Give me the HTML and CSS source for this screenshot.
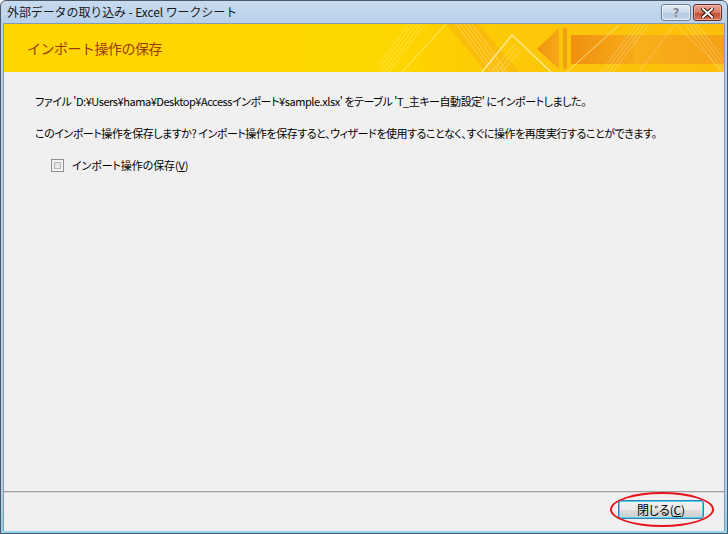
FILE: index.html
```html
<!DOCTYPE html>
<html lang="ja">
<head>
<meta charset="utf-8">
<title>外部データの取り込み - Excel ワークシート</title>
<link rel="stylesheet" href="styles.css">
</head>
<body>
<div class="window">
  <div class="titlebar">
    <span class="title">外部データの取り込み - Excel ワークシート</span>
    <div class="caption-buttons">
      <div class="cbtn help"><span>?</span></div>
      <div class="cbtn close">
        <svg width="13" height="10" viewBox="0 0 13 10"><path d="M2 1 L11 9 M11 1 L2 9" stroke="#3a1a14" stroke-width="4" stroke-linecap="square"/><path d="M2 1 L11 9 M11 1 L2 9" stroke="#fff" stroke-width="2" stroke-linecap="square"/></svg>
      </div>
    </div>
  </div>
  <div class="client">
    <div class="banner">
      <span class="banner-title">インポート操作の保存</span>
      <svg class="banner-art" width="345" height="48" viewBox="0 0 345 48">
        <defs>
          <linearGradient id="bg" x1="0" x2="1" y1="0" y2="0">
            <stop offset="0" stop-color="#ffd800" stop-opacity="0"/>
            <stop offset="0.15" stop-color="#fed000"/>
            <stop offset="0.5" stop-color="#fcc60a"/>
            <stop offset="1" stop-color="#fbbf0c"/>
          </linearGradient>
          <linearGradient id="arrow" x1="0" x2="1" y1="0" y2="0">
            <stop offset="0" stop-color="#f09010"/>
            <stop offset="1" stop-color="#f6aa18"/>
          </linearGradient>
          <linearGradient id="rshape" x1="0" x2="1" y1="0" y2="0">
            <stop offset="0" stop-color="#f8b01a"/>
            <stop offset="1" stop-color="#f5a214"/>
          </linearGradient>
        </defs>
        <rect x="0" y="0" width="345" height="48" fill="url(#bg)"/>
        <g stroke="#fff" stroke-opacity="0.28" stroke-width="1">
          <line x1="-6" y1="48" x2="30" y2="0"/>
          <line x1="-2" y1="48" x2="34" y2="0"/>
          <line x1="2" y1="48" x2="38" y2="0"/>
          <line x1="6" y1="48" x2="42" y2="0"/>
          <line x1="10" y1="48" x2="46" y2="0"/>
        </g>
        <line x1="23" y1="48" x2="67" y2="0" stroke="#fff6a0" stroke-opacity="0.7" stroke-width="1"/>
        <polygon points="67,0 100,0 140,48 107,48" fill="#f6ae10" fill-opacity="0.45"/>
        <g stroke="#fff" stroke-opacity="0.3" stroke-width="1">
          <line x1="77" y1="0" x2="112" y2="48"/>
          <line x1="81" y1="0" x2="116" y2="48"/>
          <line x1="85" y1="0" x2="120" y2="48"/>
          <line x1="89" y1="0" x2="124" y2="48"/>
          <line x1="93" y1="0" x2="128" y2="48"/>
        </g>
        <polyline points="103,48 133,11 172,48" fill="none" stroke="#fff4c0" stroke-opacity="0.75" stroke-width="1.5"/>
        <g stroke="#fff" stroke-opacity="0.3" stroke-width="1">
          <line x1="113" y1="48" x2="136" y2="20"/>
          <line x1="118" y1="48" x2="139" y2="23"/>
          <line x1="123" y1="48" x2="142" y2="26"/>
        </g>
        <polygon points="158,25 180,4 180,45" fill="url(#arrow)"/>
        <rect x="184" y="4" width="4" height="41" fill="#f4a014"/>
        <rect x="192" y="11" width="62" height="29" fill="url(#arrow)"/>
        <line x1="188" y1="48" x2="240" y2="1" stroke="#fff6b0" stroke-opacity="0.7" stroke-width="1"/>
        <rect x="254" y="11" width="91" height="29" fill="url(#rshape)"/>
        <g stroke="#fff" stroke-opacity="0.28" stroke-width="1">
          <line x1="222" y1="48" x2="258" y2="0"/>
          <line x1="226" y1="48" x2="262" y2="0"/>
          <line x1="230" y1="48" x2="266" y2="0"/>
          <line x1="234" y1="48" x2="270" y2="0"/>
          <line x1="306" y1="0" x2="342" y2="48"/>
          <line x1="310" y1="0" x2="346" y2="48"/>
          <line x1="314" y1="0" x2="350" y2="48"/>
          <line x1="318" y1="0" x2="354" y2="48"/>
        </g>
        <polyline points="260,48 296,0 345,48" fill="none" stroke="#fff" stroke-opacity="0.25" stroke-width="1"/>
      </svg>
    </div>
    <div class="content">
      <p class="msg">ファイル 'D:¥Users¥hama¥Desktop¥Accessインポート¥sample.xlsx' をテーブル 'T_主キー自動設定' にインポートしました。</p>
      <p class="msg">このインポート操作を保存しますか? インポート操作を保存すると、ウィザードを使用することなく、すぐに操作を再度実行することができます。</p>
      <label class="check-row">
        <span class="checkbox"></span>
        <span class="check-label">インポート操作の保存(<u>V</u>)</span>
      </label>
    </div>
    <div class="footer">
      <div class="button">閉じる(<u>C</u>)</div>
      <div class="highlight"></div>
    </div>
  </div>
</div>
</body>
</html>
```

FILE: styles.css
```css
* { box-sizing: border-box; }
html, body { margin: 0; padding: 0; background: #fff; }
body { width: 728px; height: 534px; overflow: hidden; }

.window {
  width: 728px;
  height: 534px;
  border: 1px solid #4b5868;
  border-radius: 6px 6px 0 0;
  background: linear-gradient(to bottom, #c8dbef 0px, #b9d0ea 22px, #b9d1ea 480px, #8fd2ee 534px);
  padding: 0 2px 2px 2px;
  display: flex;
  flex-direction: column;
  font-family: "Noto Sans CJK JP", "Noto Sans", sans-serif;
}

.titlebar {
  height: 22px;
  display: flex;
  align-items: center;
  padding-left: 4px;
  position: relative;
}
.title {
  font-size: 12px;
  color: #1a1a1a;
  line-height: 22px;
  letter-spacing: -0.1px;
}
.caption-buttons {
  margin-left: auto;
  display: flex;
  gap: 2px;
  align-self: flex-start;
  margin-top: 3px;
  margin-right: 3px;
}
.cbtn {
  height: 17px;
  border-radius: 3px;
  display: flex;
  align-items: center;
  justify-content: center;
}
.cbtn.help {
  width: 30px;
  border: 1px solid #6c7f96;
  background: linear-gradient(to bottom, #e3ecf6 0%, #c9d9eb 50%, #b3c8e0 51%, #c4d6ea 100%);
  box-shadow: inset 0 0 0 1px rgba(255,255,255,0.6);
}
.cbtn.help span {
  font-family: "DejaVu Sans", sans-serif;
  font-weight: bold;
  font-size: 12px;
  color: #7d8590;
  line-height: 1;
  text-shadow: 0 0 1px #fff;
}
.cbtn.close {
  width: 29px;
  border: 1px solid #6a2b24;
  background: linear-gradient(to bottom, #e8a493 0%, #d97a66 50%, #c44a33 51%, #d5765d 100%);
  box-shadow: inset 0 0 0 1px rgba(255,220,210,0.5);
}

.client {
  flex: 1;
  display: flex;
  flex-direction: column;
  background: #f0f0f0;
  border: 1px solid #8499b2;
  border-bottom: none;
}

.banner {
  height: 48px;
  display: flex;
  align-items: center;
  background: linear-gradient(to right, #ffd600 0%, #ffd700 50%, #fed200 100%);
}
.banner-title {
  padding-left: 23px;
  font-size: 14px;
  color: #9e3a0a;
  letter-spacing: -0.5px;
  line-height: 48px;
}
.banner-art {
  margin-left: auto;
  display: block;
}

.content {
  flex: 1;
  padding: 22px 0 0 31px;
  font-size: 11px;
  color: #000;
}
.msg {
  margin: 0 0 17px 0;
  line-height: 15px;
  font-feature-settings: "palt";
  letter-spacing: -0.45px;
  white-space: nowrap;
}
.check-row {
  display: flex;
  align-items: center;
  gap: 8px;
  padding-left: 16px;
  margin-top: 2px;
  line-height: 15px;
}
.checkbox {
  width: 13px;
  height: 13px;
  border: 1px solid #8e8f8f;
  background: linear-gradient(135deg, #dcdcdc 0%, #f4f4f4 100%);
  box-shadow: inset 0 0 0 2px #f4f4f4, inset 0 0 0 3px #b4b4b4;
}
.check-label {
  font-feature-settings: "palt";
  letter-spacing: -0.1px;
}
u { text-decoration: underline; text-underline-offset: 1px; }

.footer {
  height: 40px;
  border-top: 1px solid #a0a0a0;
  box-shadow: inset 0 1px 0 #dcdcdc;
  display: flex;
  justify-content: flex-end;
  align-items: flex-start;
  padding: 8px 20px 0 0;
  position: relative;
}
.button {
  width: 86px;
  height: 19px;
  border: 1px solid #3c7fb1;
  border-radius: 3px;
  background: linear-gradient(to bottom, #f2f2f2 0%, #ebebeb 50%, #dddddd 51%, #cfcfcf 100%);
  box-shadow: inset 0 0 0 1px #48d2f4;
  display: flex;
  align-items: center;
  justify-content: center;
  font-size: 12px;
  color: #000;
  font-feature-settings: "palt";
  letter-spacing: -0.2px;
}
.highlight {
  position: absolute;
  left: 606px;
  top: 0px;
  width: 104px;
  height: 35px;
  border: 2px solid #e8141c;
  border-radius: 50%;
  pointer-events: none;
}
```
